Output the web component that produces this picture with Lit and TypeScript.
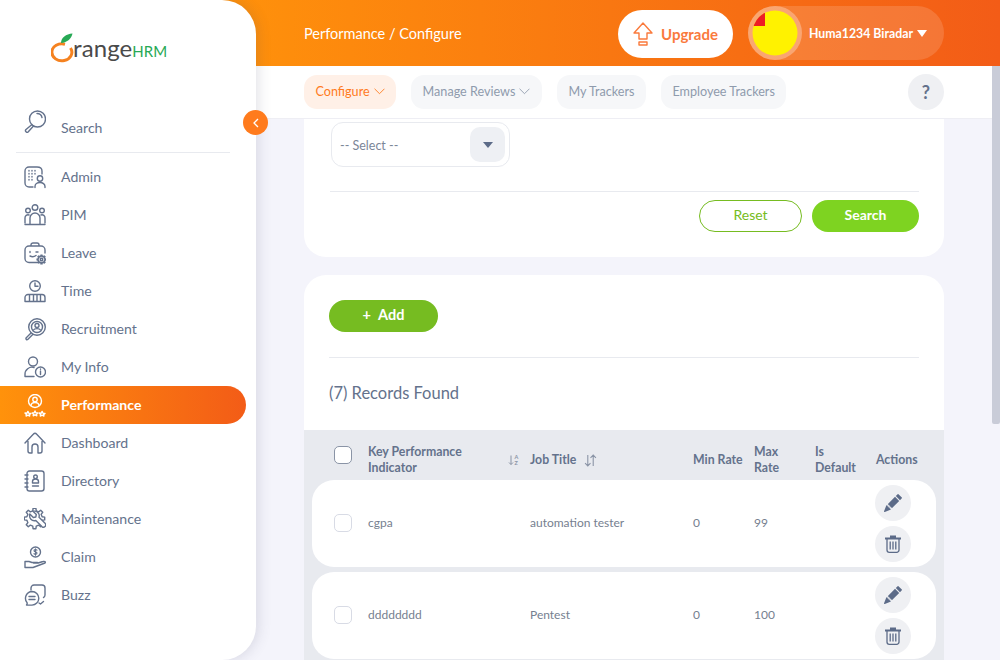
import { LitElement, html, css, svg } from "lit";
import { customElement } from "lit/decorators.js";

const gear = (cx: number, cy: number, ro: number, ri: number, n: number) => {
  const pts: string[] = [];
  const step = (Math.PI * 2) / n;
  for (let i = 0; i < n; i++) {
    const a = i * step;
    const w = step * 0.22;
    const at = (r: number, t: number) => `${(cx + r * Math.cos(t)).toFixed(2)} ${(cy + r * Math.sin(t)).toFixed(2)}`;
    pts.push(at(ri, a - w * 1.3), at(ro, a - w * 0.8), at(ro, a + w * 0.8), at(ri, a + w * 1.3));
  }
  return `M${pts.join("L")}Z`;
};

const icons: Record<string, any> = {
  Admin: svg`<path d="M13 1H5a4 4 0 0 0-4 4v12a4 4 0 0 0 4 4h4M13 1c3 0 5 1.500 5 4v3"/><circle cx="16" cy="12.500" r="2.700"/><path d="M11 21.500v-1a5 4 0 0 1 10 0v1"/><path stroke-dasharray=".6 2.400" d="M5 4.500v12M8 4.500v12M11 4.500v6"/>`,
  PIM: svg`<circle cx="11" cy="3.500" r="2.800"/><circle cx="4" cy="6.500" r="2.300"/><circle cx="18" cy="6.500" r="2.300"/><path d="M6 20v-6a5 5 0 0 1 10 0v6M1 20.500h20M1 19v-5a3 3 0 0 1 4-3M21 19v-5a3 3 0 0 0-4-3"/>`,
  Leave: svg`<path d="M7 4V3a2 2 0 0 1 2-2h4a2 2 0 0 1 2 2v1M14 20.500H5a4 4 0 0 1-4-4V8a4 4 0 0 1 4-4h12a4 4 0 0 1 4 4v3"/><path d="M6 9.500v1M6 14c2 1 4 1 6-.500M12 10h2"/><path fill="#fff" d="${gear(17.5, 17.5, 4.4, 3.1, 8)}"/><circle cx="17.500" cy="17.500" r="1.200"/>`,
  Time: svg`<circle cx="11" cy="6" r="5.300"/><path d="M11 3v3.300h3M1 21.500v-4a3 3 0 0 1 3-3h14a3 3 0 0 1 3 3v4zM5.500 15v6M9.500 15v6M13 15v6M16.500 15v6"/>`,
  Recruitment: svg`<circle cx="13" cy="9" r="8.300"/><circle cx="13" cy="9" r="5.500"/><circle cx="13" cy="7.500" r="2"/><path d="M9.500 12c1-1.800 6-1.800 7 0M7 15l-5 5a1.200 1.200 0 0 0 1.700 1.500l5-5"/>`,
  "My Info": svg`<circle cx="9" cy="5.500" r="4.500"/><path d="M1 20.500v-2a7 7 0 0 1 9-7M1 20.500h9"/><circle cx="16.500" cy="16" r="5"/><path d="M16.500 15v3.500M16.500 13v.300"/>`,
  Performance: svg`<circle cx="11" cy="7" r="6.500"/><circle cx="11" cy="5.500" r="2.200"/><path d="M7 11.500c.5-4 7.500-4 8 0M1 19l2 .2.9-1.800.9 1.800 2 .2-1.400 1.200.3 1.400-1.800-.8-1.800.8.3-1.400zM8.200 19l2-.2.8-1.800.8 1.800 2 .2-1.400 1.300.4 1.500-1.800-.9-1.800.9.4-1.500zM15.200 19l2 .2.9-1.800.9 1.800 2 .2-1.400 1.200.3 1.400-1.800-.8-1.800.8.3-1.400z"/>`,
  Dashboard: svg`<path d="M1 11 9.500 2a2 2 0 0 1 3 0L21 11M4 9.500V19a2 2 0 0 0 2 2h2v-6a3 3 0 0 1 6 0v6h2a2 2 0 0 0 2-2V9.500"/>`,
  Directory: svg`<rect x="3" y="1" width="17" height="20" rx="2.500"/><path d="M1 5h3M1 9h3M1 13h3M1 17h3M8.500 13v-1.500a3 2.500 0 0 1 6 0V13zM8.500 16h6"/><circle cx="11.500" cy="6.800" r="1.800"/>`,
  Maintenance: svg`<path d="${gear(10.5, 10.5, 10.3, 7.8, 8)}"/><path fill="#fff" d="M5.500 4.500l3.500 3.500 2.500-.5.500-2.500-3.300-3.200c3.800-1 7.200 2 6 6l6.300 6.300a2.300 2.300 0 0 1-3.200 3.200l-6.300-6.300c-4 1.200-7-2.500-6-6.500z" transform="translate(.3 1.500)"/>`,
  Claim: svg`<circle cx="11.500" cy="6" r="5"/><path d="M13 4.200c-1-1-3-.7-3 .6s3 .8 3 2.200-2 1.500-3 .7M11.500 2.800v6.500" stroke-width="1.100"/><path d="M1 15.500v6h8l12-4.500c1-1-.5-2-2-1.500l-5 1.500H9.500M1 15.500h4l3 1h5.500"/>`,
  Buzz: svg`<path d="M7 6V4a3 3 0 0 1 3-3h8a3 3 0 0 1 3 3v7c0 1.500-.5 2-1.500 2.500"/><path fill="#fff" d="M8 7.500a6.800 6.800 0 1 1 0 13.600H2.500c.8-.8 .8-1.800 .4-2.700A6.800 6.800 0 0 1 8 7.500z"/><path d="M5 12.500h6M5 15.500h6M15 19l1.500 1 3-2.500"/>`,
};

const searchIcon = svg`<circle cx="13.500" cy="9" r="8"/><path d="M8 14.500 2 19.500a1.600 1.600 0 0 0 2.300 2.300l5.400-6M13 3.500c2.500 0 4.500 1.500 5 4"/>`;

const menu = ["Admin", "PIM", "Leave", "Time", "Recruitment", "My Info", "Performance", "Dashboard", "Directory", "Maintenance", "Claim", "Buzz"];
const tabs = [
  { t: "Configure", chev: true, on: true },
  { t: "Manage Reviews", chev: true },
  { t: "My Trackers" },
  { t: "Employee Trackers" },
];
const rows = [
  { k: "cgpa", j: "automation tester", min: "0", max: "99" },
  { k: "dddddddd", j: "Pentest", min: "0", max: "100" },
];

const pencil = html`<svg class="solid" viewBox="0 0 16 16" width="18" height="18"><path d="M12.854.146a.5.5 0 0 0-.707 0L10.500 1.793 14.207 5.500l1.647-1.646a.5.5 0 0 0 0-.708l-3-3zm.646 6.061L9.793 2.500 3.293 9H3.500a.5.5 0 0 1 .5.500v.5h.5a.5.5 0 0 1 .5.500v.5h.5a.5.5 0 0 1 .5.500v.5h.5a.5.5 0 0 1 .5.500v.207l6.500-6.500zm-7.468 7.468A.5.5 0 0 1 6 13.500V13h-.5a.5.5 0 0 1-.5-.500V12h-.5a.5.5 0 0 1-.5-.500V11h-.5a.5.5 0 0 1-.5-.500V10h-.5a.499.499 0 0 1-.175-.032l-.179.178a.5.5 0 0 0-.11.168l-2 5a.5.5 0 0 0 .65.650l5-2a.5.5 0 0 0 .168-.110l.178-.178z"/></svg>`;
const trash = html`<svg class="line" viewBox="0 0 16 18" width="16" height="18"><path fill="currentColor" stroke="none" d="M0 2.500h16v2H0zM5 .5h6v2H5z"/><path stroke-width="1.300" d="M2 4v11a2.300 2.300 0 0 0 2.300 2.300h7.400A2.300 2.300 0 0 0 14 15V4M5.200 6.500v8M8 6.500v8M10.800 6.500v8"/></svg>`;

@customElement("app-root")
export class AppRoot extends LitElement {
  static styles = css`
    :host { display: block; width: 1000px; height: 660px; overflow: hidden; font-family: "Lato", "Noto Sans", sans-serif; color: #64728c; background: #f4f4fb; }
    * { box-sizing: border-box; }
    .app { display: flex; height: 660px; }

    .side { position: relative; z-index: 2; flex: 0 0 256px; height: 660px; background: #fff; border-radius: 0 34px 34px 0; box-shadow: 2px 0 14px rgba(70, 70, 100, .16); }
    .logo { height: 110px; display: flex; align-items: flex-start; padding: 33px 0 0 51px; }
    .logo svg { flex: none; width: 23px; height: 30px; margin-right: -1px; }
    .logo .r { font-weight: 400; font-size: 24px; line-height: 30px; color: #4a4a4a; letter-spacing: .1px; }
    .logo .h { font-weight: 400; font-size: 15px; line-height: 30px; color: #27a955; margin: 3px 0 0 0; }
    .search { margin: 0 26px 0 16px; height: 43px; border-bottom: 1px solid #e8eaef; display: flex; padding-left: 8px; }
    .search span { margin: 8px 0 0 15px; }
    .ico { flex: none; width: 22px; height: 23px; fill: none; stroke: currentColor; stroke-width: 1.400; stroke-linecap: round; stroke-linejoin: round; }
    .label { font-size: 14.100px; line-height: 20px; }
    .menu { padding-top: 5px; }
    .item { height: 38px; width: 246px; display: flex; align-items: center; gap: 15px; padding-left: 24px; border-radius: 0 19px 19px 0; }
    .item.on { background: linear-gradient(90deg, #ff920b, #f35c17); color: #fff; font-weight: 700; }
    .toggle { position: absolute; left: 243px; top: 110px; width: 25px; height: 25px; border-radius: 50%; background: #ff7b1d; display: flex; align-items: center; justify-content: center; }
    .toggle svg { fill: none; stroke: #fff; stroke-width: 1.300; }

    .main { flex: 1; min-width: 0; margin-left: -36px; display: flex; flex-direction: column; }
    .head { flex: 0 0 66px; background: linear-gradient(90deg, #ff920b, #f35c17); display: flex; align-items: center; padding: 0 56px 0 84px; color: #fff; }
    .crumb { flex: 1; font-size: 14.500px; }
    .up { width: 115px; height: 48px; margin-top: 2px; border-radius: 24px; background: #fff; display: flex; align-items: center; justify-content: center; gap: 8px; color: #fa7a3c; font-weight: 700; font-size: 15px; }
    .up svg { fill: none; stroke: currentColor; stroke-width: 1.400; stroke-linejoin: round; }
    .prof { width: 196px; height: 54px; margin-left: 15px; border-radius: 27px; background: rgba(255, 255, 255, .14); display: flex; align-items: center; font-size: 12.300px; font-weight: 700; }
    .ring { width: 54px; height: 54px; border-radius: 50%; background: rgba(255, 255, 255, .3); display: flex; align-items: center; justify-content: center; margin-right: 7px; }
    .caret { margin-left: 4px; }

    .below { flex: 1; min-height: 0; display: flex; }
    .scroll { flex: 1; min-width: 0; display: flex; flex-direction: column; overflow: hidden; }
    .bar { flex: 0 0 8px; background: #f4f4fb; }
    .thumb { height: 358px; background: #c9ccd8; border-radius: 0 0 2px 2px; }

    .nav { flex: 0 0 53px; background: #fff; border-bottom: 1px solid #eeeef4; display: flex; align-items: center; gap: 15px; padding: 0 48px 0 84px; }
    .tab { height: 34px; padding: 0 11.500px 1px; border-radius: 13px; background: #f6f7f9; color: #8f9bad; font-size: 12.600px; display: flex; align-items: center; gap: 4px; }
    .tab.on { background: #fff0e7; color: #ff7b1d; }
    .tab svg { fill: none; stroke: currentColor; stroke-width: .8; }
    .help { margin-left: auto; width: 36px; height: 36px; border-radius: 50%; background: #eff0f3; display: flex; align-items: center; justify-content: center; font-size: 18px; font-weight: 700; color: #64728c; }

    .content { flex: 1; min-height: 0; overflow: hidden; padding: 0 48px 0 84px; }
    .card1 { height: 138px; background: #fff; border-radius: 0 0 22px 22px; padding: 3px 25px 0 26px; margin-bottom: 18px; }
    .select { width: 179px; height: 45px; margin-left: 1px; border: 1px solid #e8eaef; border-radius: 12px; display: flex; align-items: center; justify-content: space-between; padding: 0 4px 0 8px; font-size: 12.500px; color: #7b8698; }
    .select span { padding-top: 1px; }
    .sbtn { width: 35px; height: 35px; background: #eef0f4; border-radius: 10px; display: flex; align-items: center; justify-content: center; }
    .line1 { height: 1px; background: #e8eaef; margin-top: 24px; }
    .acts { display: flex; justify-content: flex-end; gap: 10px; margin-top: 8px; }
    .btn { height: 32px; padding-bottom: 3px; border-radius: 16px; font-size: 14px; font-weight: 700; display: flex; align-items: center; justify-content: center; }
    .reset { width: 103px; border: 1px solid #76bc21; color: #76bc21; font-weight: 400; }
    .go { width: 107px; background: #7ed321; color: #fff; }

    .card2 { background: #fff; border-radius: 22px 22px 0 0; padding-top: 25px; }
    .pad { padding: 0 25px; }
    .add { width: 109px; background: #76bc21; color: #fff; gap: 7px; font-size: 14.500px; }
    .count { height: 72px; display: flex; align-items: center; font-size: 16.500px; padding-bottom: 3px; }
    .pad hr { border: 0; height: 1px; background: #e8eaef; margin: 25px 0 0; }
    .tbl { background: #e8eaef; padding-bottom: 8px; }
    .thead, .row { display: grid; align-items: center; }
    .thead { height: 50px; grid-template-columns: 64px 162px 163px 61px 61px 61px 1fr; font-size: 12.300px; font-weight: 700; line-height: 16px; padding-top: 10px; }
    .row { height: 87px; margin: 0 8px 5px; padding-bottom: 2px; background: #fff; border-radius: 22px; grid-template-columns: 56px 162px 163px 61px 61px 61px 1fr; font-size: 12px; color: #76808f; }
    .thc { display: flex; align-items: center; }
    .thc.a { padding-right: 10px; justify-content: space-between; }
    .thc.b { gap: 8px; }
    .thc svg { fill: none; stroke: #8a94a6; stroke-width: 1; flex: none; }
    .thc text { fill: #8a94a6; stroke: none; }
    .cb { width: 18px; height: 18px; border-radius: 5px; border: 1px solid #d8dbe5; background: #fff; margin-left: 22px; }
    .thead .cb { margin: -10px 0 0 30px; border-color: #8a94a6; }
    .ac { display: flex; flex-direction: column; gap: 5px; margin: 2px 0 0 -1px; }
    .rb { width: 36px; height: 36px; border-radius: 50%; background: #eff0f3; display: flex; align-items: center; justify-content: center; color: #5c6b88; }
    .solid { fill: currentColor; }
    .line { fill: none; stroke: currentColor; }
  `;

  render() {
    return html`<div class="app">
      <aside class="side">
        <div class="logo">
          <svg viewBox="0 0 23 30">
            <path d="M14 11.200A10 8.500 0 1 0 19.500 15" fill="none" stroke="#f58220" stroke-width="3"/>
            <path d="M10 10C10 4.500 15 1 21.500 .5c-1 5-5 9-11.500 9.500z" fill="#27a955"/>
          </svg>
          <span class="r">range</span><span class="h">HRM</span>
        </div>
        <div class="search label">
          <svg class="ico" viewBox="0 0 22 23">${searchIcon}</svg><span>Search</span>
        </div>
        <div class="menu">
          ${menu.map((m) => html`<div class="item label ${m === "Performance" ? "on" : ""}">
            <svg class="ico" viewBox="0 0 22 23">${icons[m]}</svg><span>${m}</span>
          </div>`)}
        </div>
        <div class="toggle"><svg viewBox="0 0 8 10" width="8" height="10"><path d="M6 1 2 5l4 4"/></svg></div>
      </aside>
      <div class="main">
        <header class="head">
          <div class="crumb">Performance / Configure</div>
          <div class="up">
            <svg viewBox="0 0 20 24" width="20" height="24"><path d="M10 1 19 11h-5v6H6v-6H1zM6 20h8v3H6z"/></svg>
            <span>Upgrade</span>
          </div>
          <div class="prof">
            <div class="ring">
              <svg viewBox="0 0 46 46" width="46" height="46">
                <defs><clipPath id="cp"><circle cx="23" cy="23" r="22.500"/></clipPath></defs>
                <circle cx="23" cy="23" r="22.500" fill="#fff200"/>
                <path clip-path="url(#cp)" d="M0 0h13v16H0z" fill="#ee1c25"/>
              </svg>
            </div>
            <span>Huma1234 Biradar</span>
            <svg class="caret" viewBox="0 0 10 7" width="10" height="7"><path d="M0 0h10L5 7z" fill="#fff"/></svg>
          </div>
        </header>
        <div class="below">
          <div class="scroll">
            <nav class="nav">
              ${tabs.map((t) => html`<div class="tab ${t.on ? "on" : ""}">
                <span>${t.t}</span>
                ${t.chev ? html`<svg viewBox="0 0 10 6" width="11" height="7"><path d="M.5.500 5 5 9.500.5"/></svg>` : ""}
              </div>`)}
              <div class="help">?</div>
            </nav>
            <div class="content">
              <section class="card1">
                <div class="select"><span>-- Select --</span>
                  <div class="sbtn"><svg viewBox="0 0 10 6" width="10" height="6"><path d="M0 0h10L5 6z" fill="#5c6b88"/></svg></div>
                </div>
                <div class="line1"></div>
                <div class="acts"><div class="btn reset">Reset</div><div class="btn go">Search</div></div>
              </section>
              <section class="card2">
                <div class="pad">
                  <div class="btn add"><span>+</span><span>Add</span></div>
                  <hr />
                  <div class="count">(7) Records Found</div>
                </div>
                <div class="tbl">
                  <div class="thead">
                    <div class="cb"></div>
                    <div class="thc a"><span>Key Performance<br />Indicator</span>
                      <svg viewBox="0 0 12 12" width="12" height="12"><path d="M3 1.500v9M1 8.500l2 2 2-2"/><text x="6.500" y="5" font-size="5.500">A</text><text x="6.500" y="11" font-size="5.500">Z</text></svg>
                    </div>
                    <div class="thc b"><span>Job Title</span>
                      <svg viewBox="0 0 12 12" width="13" height="13"><path d="M3.500 1v10M1 8.500 3.500 11 6 8.500M8.500 11V1M6 3.500 8.500 1 11 3.500"/></svg>
                    </div>
                    <div>Min Rate</div>
                    <div>Max<br />Rate</div>
                    <div>Is<br />Default</div>
                    <div>Actions</div>
                  </div>
                  ${rows.map((r) => html`<div class="row">
                    <div class="cb"></div>
                    <div>${r.k}</div>
                    <div>${r.j}</div>
                    <div>${r.min}</div>
                    <div>${r.max}</div>
                    <div></div>
                    <div class="ac"><div class="rb">${pencil}</div><div class="rb">${trash}</div></div>
                  </div>`)}
                </div>
              </section>
            </div>
          </div>
          <div class="bar"><div class="thumb"></div></div>
        </div>
      </div>
    </div>`;
  }
}
